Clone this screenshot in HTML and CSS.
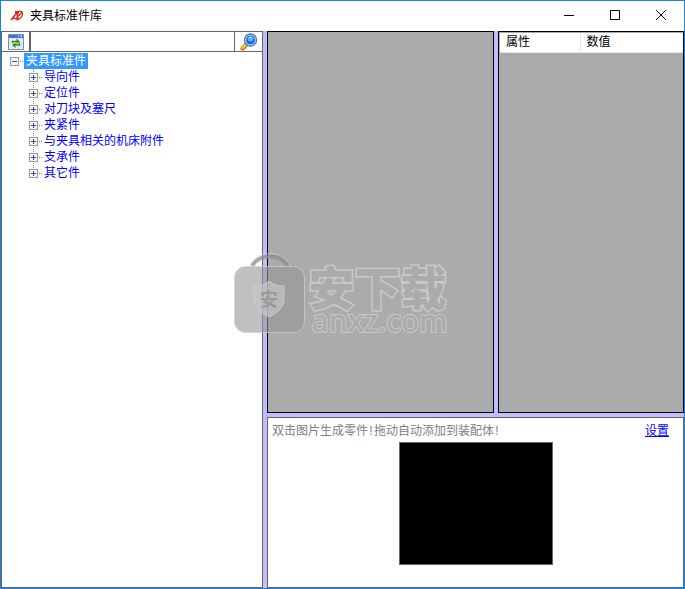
FILE: index.html
```html
<!DOCTYPE html>
<html lang="zh-CN">
<head>
<meta charset="utf-8">
<title>夹具标准件库</title>
<link rel="stylesheet" href="styles.css">
</head>
<body>
<div class="window">
  <header class="titlebar">
    <svg class="logo" viewBox="0 0 14 12" fill="none" stroke="#cf2a1c"><path d="M1 10 7 2.500M3 8.500h5" stroke-width="1.500"/><path d="M5 2h4M7.500 2.500v8" stroke-width="2"/><path d="M8.500 1.500c3-1 4.500.5 4 3s-2 4-4 5M12 2 8.500 6" stroke-width="1.200"/></svg>
    <h1 class="title">夹具标准件库</h1>
    <button class="caption" aria-label="最小化"><svg viewBox="0 0 12 12"><path d="M1 5.500h10"/></svg></button>
    <button class="caption" aria-label="最大化"><svg viewBox="0 0 12 12"><path d="M1.500.500h9v9h-9z"/></svg></button>
    <button class="caption" aria-label="关闭"><svg viewBox="0 0 12 12"><path d="m1 0 10 10M11 0 1 10"/></svg></button>
  </header>
  <main class="workspace">
    <section class="browser">
      <form class="toolbar">
        <button class="tool refresh" type="button" aria-label="刷新">
          <svg viewBox="0 0 16 16"><path d="M.5.500h15v15H.5z" fill="#e3edfa" stroke="#6f8cc0"/><path d="M1 1h14v3H1z" fill="#4575c9"/><path d="M10 2h1M12 2h2" stroke="#fff"/><path d="M4.500 9V7.500H9M11.500 8.500V11H7" fill="none" stroke="#398a20" stroke-width="1.500"/><path d="m8.500 4.500 3.500 3-3.500 2.500zM7.500 8.500 4 11l3.500 3z" fill="#398a20"/></svg>
        </button>
        <input class="search" type="text" aria-label="搜索">
        <button class="tool find" type="button" aria-label="查找">
          <svg viewBox="0 0 18 18"><path d="m2.500 15.500 4-4" stroke="#a8610c" stroke-width="4" stroke-linecap="round"/><path d="m2.500 15 3.500-3.500" stroke="#ffc43a" stroke-width="2.500" stroke-linecap="round"/><circle cx="10.500" cy="7" r="6" fill="#e8f3ff" stroke="#4c78ca" stroke-width="1.500"/><circle cx="10.500" cy="7" r="4.500" fill="#1769d8"/><ellipse cx="10.500" cy="6" rx="3" ry="2.500" fill="#55b1fa"/><path d="M9 4.500h3" stroke="#c9eaff"/></svg>
        </button>
      </form>
      <ul class="tree">
        <li class="node"><span class="toggle open"></span><a class="label selected" href="#">夹具标准件</a>
          <ul class="branch">
            <li class="node"><span class="toggle"></span><a class="label" href="#">导向件</a></li>
            <li class="node"><span class="toggle"></span><a class="label" href="#">定位件</a></li>
            <li class="node"><span class="toggle"></span><a class="label" href="#">对刀块及塞尺</a></li>
            <li class="node"><span class="toggle"></span><a class="label" href="#">夹紧件</a></li>
            <li class="node"><span class="toggle"></span><a class="label" href="#">与夹具相关的机床附件</a></li>
            <li class="node"><span class="toggle"></span><a class="label" href="#">支承件</a></li>
            <li class="node"><span class="toggle"></span><a class="label" href="#">其它件</a></li>
          </ul>
        </li>
      </ul>
    </section>
    <section class="canvas"></section>
    <section class="properties">
      <table class="table"><thead><tr><th>属性</th><th>数值</th></tr></thead></table>
    </section>
    <section class="preview">
      <div class="hintbar"><p class="hint">双击图片生成零件<span class="mark">!</span>拖动自动添加到装配体<span class="mark">!</span></p><a class="settings" href="#">设置</a></div>
      <div class="picture"></div>
    </section>
  </main>
  <div class="watermark">
    <svg class="bag" viewBox="0 0 72 80"><path d="M18 13C22 6 28 3.500 36 3.500S50 6 54 13" fill="none" stroke="#8d8d8d" stroke-opacity=".75" stroke-width="4"/><path d="M15.500 13C20 4 27 .5 36 .5S52 4 56.500 13" fill="none" stroke="#d2d2d2" stroke-opacity=".6"/><rect x=".5" y="13.500" width="70" height="66" rx="11" fill="#969696" fill-opacity=".6" stroke="#d0d0d0" stroke-opacity=".7"/><path d="M35 28c5 4 10 5 15 5v13c0 9-7 14-15 18-8-4-15-9-15-18V33c5 0 10-1 15-5z" fill="#c4c4c4" fill-opacity=".7" stroke="#d2d2d2" stroke-opacity=".7"/><text x="35" y="53" class="seal">安</text></svg>
    <div class="brand"><span class="brand-name">安下载</span><span class="brand-site">anxz.com</span></div>
  </div>
</div>
</body>
</html>
```

FILE: styles.css
```css
* { box-sizing: border-box; }
body { margin: 0; font: 12px/16px "Liberation Sans", "Noto Sans CJK SC", sans-serif; color: #000; }
button { margin: 0; padding: 0; border: 0; background: #fff; }
ul, p, h1 { margin: 0; padding: 0; }
ul { list-style: none; }

.window { position: relative; display: flex; flex-direction: column; min-height: 100vh; border: 1px solid #1883d7; background: #fff; }
.titlebar { display: flex; align-items: center; height: 30px; padding-left: 9px; }
.logo { width: 14px; height: 12px; }
.title { flex: 1; margin-left: 6px; font-size: 12px; font-weight: 400; }
.caption { display: grid; place-items: center; width: 46px; height: 28px; }
.caption svg { width: 12px; height: 12px; fill: none; stroke: #000; }

.workspace { flex: 1; display: grid; grid-template-columns: 262px 1fr 186px; grid-template-rows: 1fr 171px; gap: 4px; background: #bfbfff; }
.browser { grid-row: 1 / 3; border: 1px solid #666; background: #fff; }
.toolbar { display: flex; height: 20px; border-bottom: 1px solid #666; }
.tool { display: grid; place-items: center; width: 27px; }
.tool svg { width: 16px; height: 16px; }
.find svg { width: 18px; height: 18px; }
.search { flex: 1; min-width: 0; padding: 0 4px; border: solid #666; border-width: 0 1px 0 2px; outline: 0; font: inherit; }

.tree { padding: 1px 0 0 8px; }
.branch { margin-left: 19px; background: repeating-linear-gradient(#888 0 1px, transparent 1px 2px) 4px 0 / 1px calc(100% - 8px) no-repeat; }
.toggle { display: inline-block; vertical-align: top; width: 9px; height: 9px; margin: 4px 5px 0 0; border: 1px solid #999; background: linear-gradient(#34548c, #34548c) center / 5px 1px no-repeat, linear-gradient(#34548c, #34548c) center / 1px 5px no-repeat, #f4f4f4; }
.toggle.open { background: linear-gradient(#34548c, #34548c) center / 5px 1px no-repeat, #f4f4f4; }
.node { height: 16px; background: repeating-linear-gradient(90deg, transparent 0 1px, #888 1px 2px) 9px 8px / 5px 1px no-repeat; white-space: nowrap; }
.label { display: inline-block; vertical-align: top; height: 16px; padding: 0 2px; color: #00f; text-decoration: none; }
.branch .label { padding: 0 1px; }
.selected { background: #3399ff; color: #fff; }

.canvas, .properties { border: 1px solid #000; background: #ababab; }
.properties { padding: 1px 0 0 1px; }
.table { width: 100%; border-collapse: collapse; table-layout: fixed; background: #fff; }
.table th { height: 19px; padding: 0 0 0 6px; border-bottom: 1px solid #e5e5e5; font-weight: 400; text-align: left; }
.table th:first-child { width: 80px; border-right: 1px solid #e5e5e5; }

.preview { grid-column: 2 / 4; border: 1px solid #666; background: #fff; }
.hintbar { display: flex; justify-content: space-between; padding: 5px 14px 3px 4px; }
.hint { color: #808080; }
.mark { display: inline-block; width: 6px; text-align: center; }
.settings { color: #00f; }
.picture { width: 154px; height: 123px; margin: 0 auto; border: 1px solid #666; background: #000; }

.watermark { position: absolute; inset: 0; display: flex; align-items: center; justify-content: center; gap: 3px; padding: 0 4px 4px 0; pointer-events: none; }
.bag { width: 72px; height: 80px; }
.seal { font: 700 18px "Noto Sans CJK SC", sans-serif; fill: #999; text-anchor: middle; dominant-baseline: auto; }
.brand { display: flex; flex-direction: column; width: 139px; padding-top: 8px; color: #ababab; white-space: nowrap; }
.brand-name { font: 900 46px/48px "Noto Sans CJK SC", sans-serif; -webkit-text-stroke: 3px #c9c9c9; paint-order: stroke fill; }
.brand-site { padding-left: 3px; font: 500 30px/24px "Noto Sans", sans-serif; -webkit-text-stroke: 2px #c9c9c9; paint-order: stroke fill; }
```
